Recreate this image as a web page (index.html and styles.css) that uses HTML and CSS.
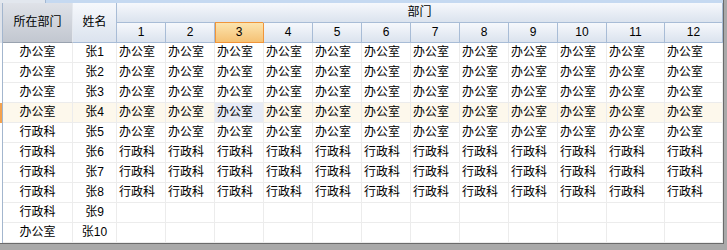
FILE: index.html
```html
<!DOCTYPE html>
<html>
<head>
<meta charset="utf-8">
<link rel="stylesheet" href="styles.css">
</head>
<body>
<div class="sheet">
  <div class="tabs"><div class="tab"></div></div>
  <div class="grid">
    <div class="ind hind"></div>
    <div class="h hsel span2">所在部门</div>
    <div class="h span2">姓名</div>
    <div class="h top">部门</div>
    <div class="h">1</div><div class="h">2</div><div class="h hact">3</div><div class="h">4</div><div class="h">5</div><div class="h">6</div><div class="h">7</div><div class="h">8</div><div class="h">9</div><div class="h">10</div><div class="h">11</div><div class="h">12</div>

    <div class="ind"></div><div class="c m">办公室</div><div class="c m">张1</div>
    <div class="c">办公室</div><div class="c">办公室</div><div class="c">办公室</div><div class="c">办公室</div><div class="c">办公室</div><div class="c">办公室</div><div class="c">办公室</div><div class="c">办公室</div><div class="c">办公室</div><div class="c">办公室</div><div class="c">办公室</div><div class="c">办公室</div>

    <div class="ind"></div><div class="c m">办公室</div><div class="c m">张2</div>
    <div class="c">办公室</div><div class="c">办公室</div><div class="c">办公室</div><div class="c">办公室</div><div class="c">办公室</div><div class="c">办公室</div><div class="c">办公室</div><div class="c">办公室</div><div class="c">办公室</div><div class="c">办公室</div><div class="c">办公室</div><div class="c">办公室</div>

    <div class="ind"></div><div class="c m">办公室</div><div class="c m">张3</div>
    <div class="c">办公室</div><div class="c">办公室</div><div class="c">办公室</div><div class="c">办公室</div><div class="c">办公室</div><div class="c">办公室</div><div class="c">办公室</div><div class="c">办公室</div><div class="c">办公室</div><div class="c">办公室</div><div class="c">办公室</div><div class="c">办公室</div>

    <div class="ind indsel"></div><div class="c m rs">办公室</div><div class="c m rs">张4</div>
    <div class="c rs">办公室</div><div class="c rs">办公室</div><div class="c cs">办公室</div><div class="c rs">办公室</div><div class="c rs">办公室</div><div class="c rs">办公室</div><div class="c rs">办公室</div><div class="c rs">办公室</div><div class="c rs">办公室</div><div class="c rs">办公室</div><div class="c rs">办公室</div><div class="c rs">办公室</div>

    <div class="ind"></div><div class="c m">行政科</div><div class="c m">张5</div>
    <div class="c">办公室</div><div class="c">办公室</div><div class="c">办公室</div><div class="c">办公室</div><div class="c">办公室</div><div class="c">办公室</div><div class="c">办公室</div><div class="c">办公室</div><div class="c">办公室</div><div class="c">办公室</div><div class="c">办公室</div><div class="c">办公室</div>

    <div class="ind"></div><div class="c m">行政科</div><div class="c m">张6</div>
    <div class="c">行政科</div><div class="c">行政科</div><div class="c">行政科</div><div class="c">行政科</div><div class="c">行政科</div><div class="c">行政科</div><div class="c">行政科</div><div class="c">行政科</div><div class="c">行政科</div><div class="c">行政科</div><div class="c">行政科</div><div class="c">行政科</div>

    <div class="ind"></div><div class="c m">行政科</div><div class="c m">张7</div>
    <div class="c">行政科</div><div class="c">行政科</div><div class="c">行政科</div><div class="c">行政科</div><div class="c">行政科</div><div class="c">行政科</div><div class="c">行政科</div><div class="c">行政科</div><div class="c">行政科</div><div class="c">行政科</div><div class="c">行政科</div><div class="c">行政科</div>

    <div class="ind"></div><div class="c m">行政科</div><div class="c m">张8</div>
    <div class="c">行政科</div><div class="c">行政科</div><div class="c">行政科</div><div class="c">行政科</div><div class="c">行政科</div><div class="c">行政科</div><div class="c">行政科</div><div class="c">行政科</div><div class="c">行政科</div><div class="c">行政科</div><div class="c">行政科</div><div class="c">行政科</div>

    <div class="ind"></div><div class="c m">行政科</div><div class="c m">张9</div>
    <div class="c"></div><div class="c"></div><div class="c"></div><div class="c"></div><div class="c"></div><div class="c"></div><div class="c"></div><div class="c"></div><div class="c"></div><div class="c"></div><div class="c"></div><div class="c"></div>

    <div class="ind"></div><div class="c m">办公室</div><div class="c m">张10</div>
    <div class="c"></div><div class="c"></div><div class="c"></div><div class="c"></div><div class="c"></div><div class="c"></div><div class="c"></div><div class="c"></div><div class="c"></div><div class="c"></div><div class="c"></div><div class="c"></div>
  </div>
</div>
</body>
</html>
```

FILE: styles.css
```css
html, body {
  margin: 0;
  padding: 0;
}
body {
  background: #a9a9a9;
  font-family: "Liberation Sans", "Noto Sans CJK SC", sans-serif;
  font-size: 12px;
  color: #000;
}
.sheet {
  width: 723px;
  height: 243px;
  background: #fff;
  border-right: 1px solid #6b6b6b;
  border-bottom: 1px solid #6b6b6b;
  overflow: hidden;
}
.tabs {
  height: 3px;
  display: flex;
  background: #c5d9f1;
}
.tab {
  width: 45px;
  background: #e2e7ee;
  border-right: 1px solid #a3b8d3;
}
.grid {
  display: grid;
  grid-template-columns: 3px 70px 44px repeat(10, 49px) 58px 58px;
  grid-auto-rows: 20px;
}
.grid > div {
  box-sizing: border-box;
  white-space: nowrap;
  overflow: hidden;
}
.ind {
  border-right: 1px solid #a3b6ce;
  background: #fff;
}
.hind {
  grid-row: span 2;
  background: #dfe3ea;
}
.indsel {
  background: #f4a24e;
}
.h {
  background: linear-gradient(#f6f8fc, #dbe3ee);
  border-right: 1px solid #a8bcd6;
  border-bottom: 1px solid #a8bcd6;
  text-align: center;
  line-height: 19px;
}
.span2 {
  grid-row: span 2;
  line-height: 38px;
}
.hsel {
  background: linear-gradient(#dfe2e8, #c2c7d0);
  border-right-color: #e4e8ee;
  border-bottom-color: #99a2af;
}
.top {
  grid-column: span 12;
}
.hact {
  position: relative;
  overflow: visible !important;
  background: linear-gradient(#fce4ae, #f5c174);
  border-right-color: #f0953a;
  border-bottom-color: #f0953a;
}
.hact::before {
  content: "";
  position: absolute;
  top: -1px;
  left: 0;
  right: 0;
  bottom: 0;
  border-top: 1px solid #f0953a;
  border-left: 1px solid #f0953a;
}
.c {
  border-right: 1px solid #ececec;
  border-bottom: 1px solid #ececec;
  line-height: 19px;
  padding-left: 2px;
}
.m {
  text-align: center;
  padding-left: 0;
}
.rs {
  background: #fdf8ec;
}
.cs {
  background: #e7ebf5;
}
```
